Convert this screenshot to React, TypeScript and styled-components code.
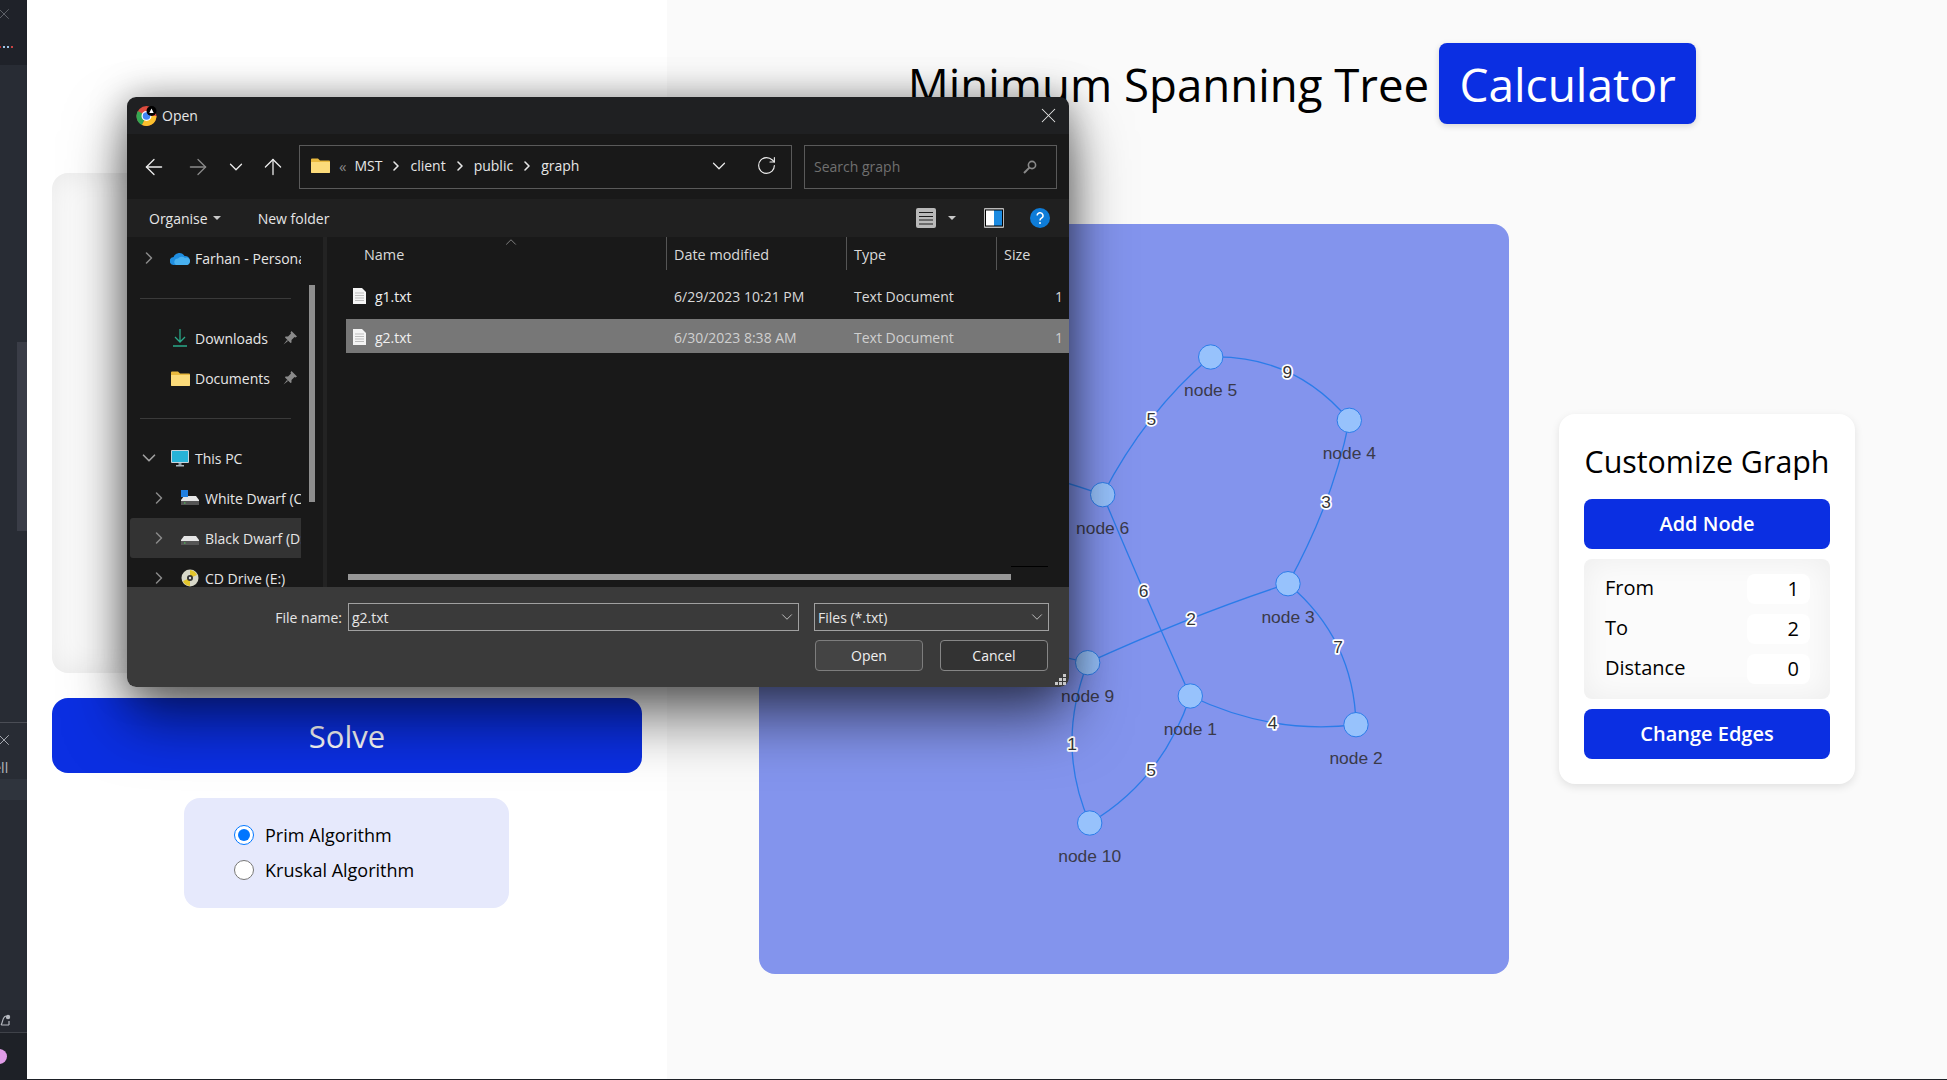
import React from "react";
import styled, {createGlobalStyle} from "styled-components";
import {ArrowLeft, ArrowRight, ArrowUp, ChevronDown, ChevronRight, ChevronUp, RotateCw, X} from "lucide-react";

const GlobalStyle = createGlobalStyle`
    html, body {
        background: #1e2127;
        height: 1080px;
        margin: 0;
        overflow: hidden;
    }
    * {
        box-sizing: border-box;
    }
`;

const Page = styled.div`
    display: flex;
    font-family: "Open Sans", "Noto Sans", sans-serif;
    height: 1079px;
    position: relative;
    width: 1947px;
`;

/* editor strip on the far left */
const Sidebar = styled.aside`
    background: #282c34;
    color: #b5b8bf;
    display: flex;
    flex-direction: column;
    flex-shrink: 0;
    overflow: hidden;
    width: 27px;
`;

const SidebarTop = styled.div`
    background: #1f2229;
    display: flex;
    flex-direction: column;
    gap: 23px;
    height: 65px;
    padding-top: 5px;
`;

const EdgeIcon = styled.span`
    display: flex;
    margin-left: -5px;
`;

const Dots = styled.div`
    display: flex;
    gap: 2px;
    margin-left: -1px;
`;

const Dot = styled.span<{$color: string}>`
    background: ${(p) => p.$color};
    height: 2px;
    width: 2px;
`;

const SidebarBody = styled.div`
    display: flex;
    flex: 1;
    flex-direction: column;
    justify-content: flex-end;
    position: relative;
`;

const ScrollThumb = styled.div`
    background: #3a3d47;
    height: 189px;
    left: 17px;
    position: absolute;
    top: 277px;
    width: 10px;
`;

const TerminalList = styled.div`
    border-top: 1px solid #4a4d55;
    display: flex;
    flex-direction: column;
    height: 288px;
    padding-top: 8px;
`;

const TerminalText = styled.div`
    font-size: 14px;
    height: 30px;
    line-height: 22px;
    margin-left: -22px;
    padding-top: 8px;
    white-space: nowrap;
`;

const TerminalActive = styled.div`
    background: #2f343d;
    height: 21px;
`;

const StatusRow = styled.div`
    align-items: center;
    background: #252830;
    border-bottom: 1px solid #3f4249;
    display: flex;
    height: 23px;
`;

const AvatarRow = styled.div`
    align-items: center;
    background: #1e2127;
    display: flex;
    height: 46px;
`;

const Avatar = styled.span`
    background: #e09ce8;
    border-radius: 50%;
    height: 15px;
    margin-left: -8px;
    width: 15px;
`;

/* app: left column */
const LeftPanel = styled.section`
    align-items: center;
    background: #fff;
    box-shadow: 1px 0 4px rgba(0, 0, 0, 0.04);
    display: flex;
    flex-direction: column;
    flex-shrink: 0;
    gap: 25px;
    padding: 173px 25px 0;
    width: 640px;
`;

const Dropzone = styled.div`
    background: #fbfbfb;
    border-radius: 16px;
    box-shadow: inset 0 0 30px rgba(0, 0, 0, 0.08);
    height: 500px;
    width: 590px;
`;

const SolveButton = styled.button`
    background: #0b2fe2;
    border: none;
    border-radius: 16px;
    color: #fff;
    font-family: inherit;
    font-size: 31px;
    font-weight: 500;
    height: 75px;
    width: 590px;
`;

const AlgorithmBox = styled.div`
    background: #e6e9fc;
    border-radius: 16px;
    display: flex;
    flex-direction: column;
    gap: 12px;
    height: 110px;
    margin-left: -1px;
    padding: 25px 50px;
    width: 325px;
`;

const AlgorithmOption = styled.label`
    align-items: center;
    color: #000;
    display: flex;
    font-size: 18px;
    gap: 11px;
    height: 23px;
`;

const Radio = styled.input`
    height: 20px;
    margin: 0;
    width: 20px;
`;

/* app: right column */
const RightPanel = styled.main`
    align-items: center;
    background: #fafafa;
    display: flex;
    flex: 1;
    flex-direction: column;
`;

const Heading = styled.header`
    align-items: center;
    display: flex;
    gap: 10px;
    height: 81px;
    margin: 43px 10px 100px 0;
`;

const Title = styled.h1`
    color: #000;
    font-size: 45.6px;
    font-weight: 400;
    margin: 0;
`;

const TitleBadge = styled.span`
    align-items: center;
    background: #0b2fe2;
    border-radius: 8px;
    box-shadow: 0 2px 6px rgba(0, 0, 0, 0.15);
    color: #fff;
    display: flex;
    font-size: 46px;
    height: 81px;
    justify-content: center;
    width: 257px;
`;

const Workspace = styled.div`
    align-items: center;
    display: flex;
    gap: 50px;
`;

const GraphCanvas = styled.div`
    background: #8394ed;
    border-radius: 16px;
    height: 750px;
    overflow: hidden;
    width: 750px;
`;

const GraphSvg = styled.svg`
    display: block;
`;

const NodeLabel = styled.text`
    fill: #3a3a4a;
    font-family: "Liberation Sans", Arial, sans-serif;
    font-size: 17.4px;
    text-anchor: middle;
`;

const EdgeLabel = styled(NodeLabel)`
    fill: #343434;
    paint-order: stroke;
    stroke: #fff;
    stroke-linejoin: round;
    stroke-width: 3.5px;
`;

const ControlCard = styled.div`
    background: #fff;
    border-radius: 16px;
    box-shadow: 0 3px 8px rgba(0, 0, 0, 0.1);
    display: flex;
    flex-direction: column;
    gap: 10px;
    padding: 25px;
    width: 296px;
`;

const CardTitle = styled.h2`
    color: #000;
    font-size: 30.4px;
    font-weight: 400;
    line-height: 46px;
    margin: 0 0 4px;
    text-align: center;
    white-space: nowrap;
`;

const CardButton = styled.button`
    background: #0b2fe2;
    border: none;
    border-radius: 8px;
    color: #fff;
    font-family: inherit;
    font-size: 20px;
    font-weight: 600;
    height: 50px;
    padding: 0 0 2px;
`;

const EdgeForm = styled.div`
    background: #fbfbfb;
    border-radius: 8px;
    box-shadow: inset 0 0 30px rgba(0, 0, 0, 0.06);
    display: flex;
    flex-direction: column;
    gap: 10px;
    padding: 15px 20px 15px 21px;
`;

const EdgeField = styled.label`
    align-items: flex-start;
    color: #000;
    display: flex;
    font-size: 20px;
    height: 30px;
    justify-content: space-between;
    line-height: 28px;
`;

const EdgeInput = styled.input`
    background: #fff;
    border: none;
    border-radius: 8px;
    color: #000;
    font-family: inherit;
    font-size: 20px;
    height: 30px;
    padding: 0 11px 2px 0;
    text-align: right;
    width: 63px;
`;

/* native windows file dialog */
const Dialog = styled.div`
    border-radius: 9px;
    box-shadow: 0 32px 60px rgba(0, 0, 0, 0.55), 0 0 36px rgba(0, 0, 0, 0.35);
    color: #e6e6e6;
    display: flex;
    flex-direction: column;
    font-family: "Open Sans", "Noto Sans", sans-serif;
    font-size: 14px;
    height: 590px;
    left: 127px;
    position: absolute;
    top: 97px;
    width: 942px;
`;

const TitleBar = styled.div`
    align-items: center;
    background: #1f2022;
    border-radius: 9px 9px 0 0;
    display: flex;
    height: 37px;
    padding: 0 8px 0 9px;
`;

const TitleText = styled.span`
    flex: 1;
`;

const NavRow = styled.div`
    align-items: center;
    background: #191919;
    display: flex;
    height: 65px;
    padding-left: 5px;
`;

const IconSlot = styled.span<{$width: number; $dim?: boolean}>`
    align-items: center;
    color: ${(p) => (p.$dim ? "#8a8a8a" : "#ececec")};
    display: flex;
    flex-shrink: 0;
    justify-content: center;
    width: ${(p) => p.$width}px;
`;

const AddressBox = styled.div`
    align-items: center;
    border: 1px solid #5a5a5a;
    display: flex;
    height: 44px;
    margin-left: 5px;
    padding-bottom: 2px;
    padding-left: 11px;
    width: 493px;
`;

const Crumbs = styled.div`
    align-items: center;
    display: flex;
    flex: 1;
    gap: 6px;
`;

const CrumbFolder = styled.span`
    display: flex;
    margin-right: 3px;
`;

const CrumbLead = styled.span`
    color: #888;
    font-size: 15px;
    margin-right: 2px;
`;

const SearchBox = styled.div`
    align-items: center;
    border: 1px solid #5a5a5a;
    color: #707070;
    display: flex;
    height: 44px;
    justify-content: space-between;
    margin-left: 12px;
    padding: 0 19px 0 9px;
    width: 253px;
`;

const Toolbar = styled.div`
    align-items: center;
    background: #202020;
    display: flex;
    height: 38px;
    padding: 0 19px 0 22px;
`;

const Caret = styled.span`
    border-left: 4px solid transparent;
    border-right: 4px solid transparent;
    border-top: 4px solid #c8c8c8;
    display: inline-block;
    height: 0;
    width: 0;
`;

const ToolItem = styled.span<{$left: number}>`
    align-items: center;
    display: flex;
    gap: 5px;
    margin-left: ${(p) => p.$left}px;
`;

const ToolSpacer = styled.span`
    flex: 1;
`;

const DialogBody = styled.div`
    background: #191919;
    display: flex;
    height: 350px;
`;

const NavPane = styled.div`
    border-right: 4px solid #232323;
    flex-shrink: 0;
    overflow: hidden;
    padding-top: 1px;
    position: relative;
    width: 200px;
`;

const NavList = styled.div`
    display: flex;
    flex-direction: column;
    width: 174px;
`;

const NavItem = styled.div<{$depth?: number; $hot?: boolean}>`
    align-items: center;
    background: ${(p) => (p.$hot ? "#333333" : "transparent")};
    border-radius: 3px 0 0 3px;
    display: flex;
    height: 40px;
    margin-left: 3px;
    overflow: hidden;
    padding-left: ${(p) => (p.$depth ? 23 : 13)}px;
    padding-right: 4px;
    white-space: nowrap;
`;

const NavChevron = styled.span`
    align-items: center;
    color: #8a8a8a;
    display: flex;
    flex-shrink: 0;
    justify-content: center;
    width: 12px;

    svg {
        flex-shrink: 0;
    }
`;

const NavIcon = styled.span`
    align-items: center;
    display: flex;
    flex-shrink: 0;
    justify-content: center;
    margin: 0 5px 0 15px;
    width: 20px;
`;

const NavPin = styled.span`
    display: flex;
    flex-shrink: 0;
    margin-left: auto;
`;

const NavDivider = styled.div`
    align-items: center;
    display: flex;
    height: 40px;
    margin-left: 13px;
    width: 151px;

    &::after {
        background: #3a3a3a;
        content: "";
        height: 1px;
        width: 100%;
    }
`;

const NavScrollbar = styled.div`
    background: #8e8e8e;
    height: 217px;
    left: 182px;
    position: absolute;
    top: 48px;
    width: 6px;
`;

const FilePane = styled.div`
    flex: 1;
    position: relative;
`;

const ColumnHeader = styled.div`
    color: #d9d9d9;
    display: grid;
    font-size: 14.4px;
    grid-template-columns: 339px 180px 150px 1fr;
    height: 41px;
`;

const ColumnCell = styled.div<{$first?: boolean}>`
    border-left: ${(p) => (p.$first ? "none" : "1px solid #555")};
    height: 33px;
    line-height: 36px;
    padding-left: ${(p) => (p.$first ? 37 : 7)}px;
`;

const SortArrow = styled.span`
    color: #a0a0a0;
    display: flex;
    left: 175px;
    position: absolute;
    top: -4px;
`;

const FileList = styled.div`
    display: flex;
    flex-direction: column;
    gap: 7px;
`;

const FileRow = styled.div<{$selected?: boolean}>`
    align-items: center;
    background: ${(p) => (p.$selected ? "#777777" : "transparent")};
    display: grid;
    grid-template-columns: 320px 180px 150px 1fr;
    height: 34px;
    margin-left: 19px;
    padding-top: 2px;
`;

const FileName = styled.div`
    align-items: center;
    color: #f0f0f0;
    display: flex;
    gap: 9px;
    padding-left: 7px;
`;

const FileCell = styled.div<{$selected?: boolean}>`
    color: ${(p) => (p.$selected ? "#cfcfcf" : "#d9d9d9")};
    padding-left: 8px;
`;

const FileSize = styled(FileCell)`
    padding-right: 6px;
    text-align: right;
`;

const HScrollbar = styled.div`
    background: #979797;
    bottom: 7px;
    height: 6px;
    left: 21px;
    position: absolute;
    width: 663px;
`;

const HScrollMark = styled.div`
    background: #000;
    bottom: 20px;
    height: 1px;
    left: 684px;
    position: absolute;
    width: 37px;
`;

const Footer = styled.div`
    background: #3a3a3a;
    border-radius: 0 0 9px 9px;
    display: flex;
    flex: 1;
    flex-direction: column;
    gap: 9px;
    padding: 16px 20px 0 0;
    position: relative;
`;

const FooterRow = styled.div`
    align-items: center;
    display: flex;
    justify-content: flex-end;
`;

const FileNameLabel = styled.span`
    margin-right: 6px;
`;

const ComboBox = styled.div<{$width: number; $left?: number}>`
    align-items: center;
    border: 1px solid #a0a0a0;
    display: flex;
    height: 28px;
    justify-content: space-between;
    margin-left: ${(p) => p.$left || 0}px;
    padding: 0 2px 0 3px;
    width: ${(p) => p.$width}px;
`;

const DialogButton = styled.button<{$primary?: boolean}>`
    background: ${(p) => (p.$primary ? "#444444" : "#333333")};
    border: 1px solid ${(p) => (p.$primary ? "#7d7d7d" : "#868686")};
    border-radius: 4px;
    color: #f0f0f0;
    font-family: inherit;
    font-size: 14px;
    height: 31px;
    margin-left: 16px;
    margin-right: 1px;
    padding: 0;
    width: 108px;
`;

const GripSvg = styled.svg`
    bottom: 2px;
    position: absolute;
    right: 3px;
`;

const ChromeIcon = () => (
    <svg width="26" height="22" viewBox="0 0 26 22">
        <circle cx="10.5" cy="11" r="10" fill="#dd4b3e" />
        <path d="M10.5 11 L1.8 6 A10 10 0 0 0 6 20 Z" fill="#34a853" />
        <path d="M10.5 11 L6 20 A10 10 0 0 0 20.5 11 Z" fill="#fbc02d" />
        <circle cx="10.5" cy="11" r="5" fill="#fff" />
        <circle cx="10.5" cy="11" r="3.8" fill="#4285f4" />
        <circle cx="15.5" cy="6" r="5" fill="#000" />
        <path d="M13.3 8 L15.5 3.5 L17.7 8 Z" fill="#fff" />
    </svg>
);

const FolderIcon = () => (
    <svg width="19" height="15" viewBox="0 0 19 15">
        <path d="M0 1.5 A1 1 0 0 1 1 .5 H7 L9 2.5 H18 A1 1 0 0 1 19 3.5 V14 A1 1 0 0 1 18 15 H1 A1 1 0 0 1 0 14 Z" fill="#e9b93e" />
        <path d="M0 4 H19 V14 A1 1 0 0 1 18 15 H1 A1 1 0 0 1 0 14 Z" fill="#fcdb7a" />
    </svg>
);

const CloudIcon = () => (
    <svg width="20" height="13" viewBox="0 0 20 13">
        <path d="M4 13 A4 4 0 0 1 3.6 5 A6 6 0 0 1 14.5 4 A4.5 4.5 0 0 1 16 13 Z" fill="#1f8ee0" />
        <path d="M6 13 A3.5 3.5 0 0 1 8 6.5 A5 5 0 0 1 15 6 A3.5 3.5 0 0 1 20 9.5 A3.5 3.5 0 0 1 16 13 Z" fill="#48b1f0" />
    </svg>
);

const DownloadIcon = () => (
    <svg width="14" height="18" viewBox="0 0 14 18" fill="none" stroke="#2aa889" strokeWidth="1.3">
        <path d="M7 0 V13 M2 8 L7 13 L12 8 M0 17 H14" />
    </svg>
);

const PinIcon = () => (
    <svg width="14" height="14" viewBox="0 0 14 14" fill="#8a8a8a">
        <path d="M8.5 0 L14 5.5 L12.5 6.5 L11.5 6 L8.5 9 L8.5 11.5 L7.5 12 L2 6.5 L2.5 5.5 L5 5.5 L8 2.5 L7.5 1.5 Z M4 9 L0.5 13.5 L5 10 Z" />
    </svg>
);

const MonitorIcon = () => (
    <svg width="18" height="17" viewBox="0 0 18 17">
        <rect x="0" y="0" width="18" height="13" rx="1" fill="#c8d4dc" />
        <rect x="1" y="1" width="16" height="11" fill="#27b3d8" />
        <rect x="7.5" y="13" width="3" height="2.5" fill="#8a9aa4" />
        <rect x="5" y="15" width="8" height="1.5" fill="#a8b4bc" />
    </svg>
);

const DriveIcon: React.FunctionComponent<{windows?: boolean}> = ({windows}) => (
    <svg width="18" height="16" viewBox="0 0 18 16">
        <path d="M3 6 H15 L18 10 V15 H0 V10 Z" fill="#e6e6e6" />
        <rect x="0" y="11" width="18" height="4" fill="#555" />
        <rect x="3" y="12.5" width="1.5" height="1" fill="#4fd35a" />
        {windows && <rect x="0" y="0" width="7" height="7" fill="#1f7fe0" />}
    </svg>
);

const DiscIcon = () => (
    <svg width="18" height="18" viewBox="0 0 18 18">
        <circle cx="9" cy="9" r="8.5" fill="#d8d8c8" />
        <path d="M9 1 A8 8 0 0 1 16 6 L9 9 Z M2 12 A8 8 0 0 0 9 17 L9 9 Z" fill="#e2c52c" />
        <circle cx="9" cy="9" r="3" fill="#333" />
        <circle cx="9" cy="9" r="1.2" fill="#ddd" />
    </svg>
);

const FileIcon = () => (
    <svg width="13" height="16" viewBox="0 0 13 16">
        <path d="M0 0 H9 L13 4 V16 H0 Z" fill="#f4f4f4" />
        <path d="M2 5 H11 M2 7.5 H11 M2 10 H11 M2 12.5 H11" stroke="#bdbdbd" strokeWidth="1" />
    </svg>
);

const SearchGlass = () => (
    <svg width="14" height="14" viewBox="0 0 14 14" fill="none" stroke="#8a8a8a" strokeWidth="1.6">
        <circle cx="9" cy="5" r="3.6" />
        <path d="M6.4 7.6 L1 13" strokeWidth="2" />
    </svg>
);

const ViewIcon = () => (
    <svg width="20" height="20" viewBox="0 0 20 20">
        <rect width="20" height="20" rx="2" fill="#b9b9b9" />
        <path d="M3 4.5 H17 M3 8.5 H17 M3 12 H17 M3 16 H17" stroke="#1c1c1c" strokeWidth="1" />
    </svg>
);

const PaneIcon = () => (
    <svg width="20" height="20" viewBox="0 0 20 20">
        <rect width="20" height="20" rx="1" fill="#b9b9b9" />
        <rect x="1" y="1.5" width="18" height="17" fill="#000" />
        <rect x="2" y="2.5" width="8" height="15" fill="#fff" />
        <rect x="10" y="2.5" width="8" height="15" fill="#1b8ae0" />
    </svg>
);

const HelpIcon = () => (
    <svg width="20" height="20" viewBox="0 0 20 20">
        <circle cx="10" cy="10" r="10" fill="#0e7cd8" />
        <path d="M7.2 7.6 A2.9 2.9 0 1 1 11.4 10.2 C10.4 10.8 10 11.3 10 12.6" fill="none" stroke="#fff" strokeWidth="1.5" />
        <circle cx="10" cy="15" r="1" fill="#fff" />
    </svg>
);

const BellIcon = () => (
    <svg width="14" height="14" viewBox="0 0 14 14" fill="none" stroke="#b5b8bf" strokeWidth="1.2">
        <path d="M1 11 C3 9 2 3 6 2 M1 11 H9 M9 11 V7" />
        <circle cx="8" cy="3" r="2.2" fill="#b5b8bf" stroke="none" />
    </svg>
);

type Point = {x: number; y: number};

// page coordinates minus the canvas corner at 759,224
const at = (x: number, y: number): Point => ({x: x - 759, y: y - 224});

// nodes 7 and 8 sit fully behind the dialog, so they have no label to show
const nodes: Array<{name: string; pos: Point; covered?: boolean}> = [
    {name: "node 1", pos: at(1190.3, 696)},
    {name: "node 2", pos: at(1356, 724.7)},
    {name: "node 3", pos: at(1288, 583.7)},
    {name: "node 4", pos: at(1349.3, 420.3)},
    {name: "node 5", pos: at(1210.7, 357)},
    {name: "node 6", pos: at(1102.7, 494.7)},
    {name: "node 7", pos: at(985, 462), covered: true},
    {name: "node 8", pos: at(985, 635), covered: true},
    {name: "node 9", pos: at(1087.7, 662.7)},
    {name: "node 10", pos: at(1089.7, 823)},
];

const byName = (n: number) => nodes[n - 1].pos;

const edges: Array<{from: number; to: number; label?: string; mid: Point}> = [
    {from: 5, to: 4, label: "9", mid: at(1287.3, 371.7)},
    {from: 5, to: 6, label: "5", mid: at(1151.3, 418.7)},
    {from: 4, to: 3, label: "3", mid: at(1326, 501.7)},
    {from: 6, to: 1, label: "6", mid: at(1143.7, 590.7)},
    {from: 3, to: 9, label: "2", mid: at(1191, 618.7)},
    {from: 3, to: 2, label: "7", mid: at(1338, 646.7)},
    {from: 1, to: 2, label: "4", mid: at(1272.7, 722.7)},
    {from: 1, to: 10, label: "5", mid: at(1151, 770)},
    {from: 9, to: 10, label: "1", mid: at(1072, 744)},
    {from: 6, to: 7, mid: at(1040, 475)},
    {from: 9, to: 8, mid: at(1035, 650)},
];

const edgePath = (a: Point, b: Point, m: Point) => {
    const cx = 2 * m.x - (a.x + b.x) / 2;
    const cy = 2 * m.y - (a.y + b.y) / 2;
    return `M${a.x} ${a.y} Q${cx} ${cy} ${b.x} ${b.y}`;
};

const Graph = () => (
    <GraphCanvas>
        <GraphSvg width="750" height="750" viewBox="0 0 750 750">
            {edges.map((e) => (
                <path
                    key={`${e.from}-${e.to}`}
                    d={edgePath(byName(e.from), byName(e.to), e.mid)}
                    fill="none"
                    stroke="#2b7ce9"
                    strokeWidth="1.3"
                />
            ))}
            {nodes.map((n) => (
                <g key={n.name}>
                    <circle cx={n.pos.x} cy={n.pos.y} r="12.2" fill="#97c2fc" stroke="#2b7ce9" strokeWidth="1" />
                    {!n.covered && (
                        <NodeLabel x={n.pos.x} y={n.pos.y + 39}>
                            {n.name}
                        </NodeLabel>
                    )}
                </g>
            ))}
            {edges
                .filter((e) => e.label)
                .map((e) => (
                    <EdgeLabel key={`l${e.from}-${e.to}`} x={e.mid.x} y={e.mid.y + 6}>
                        {e.label}
                    </EdgeLabel>
                ))}
        </GraphSvg>
    </GraphCanvas>
);

const OpenDialog = () => (
    <Dialog>
        <TitleBar>
            <ChromeIcon />
            <TitleText>Open</TitleText>
            <X size={25} strokeWidth={1} />
        </TitleBar>
        <NavRow>
            <IconSlot $width={44}>
                <ArrowLeft size={26} strokeWidth={1.2} />
            </IconSlot>
            <IconSlot $width={44} $dim>
                <ArrowRight size={26} strokeWidth={1.2} />
            </IconSlot>
            <IconSlot $width={32}>
                <ChevronDown size={22} strokeWidth={1.4} />
            </IconSlot>
            <IconSlot $width={42}>
                <ArrowUp size={26} strokeWidth={1.2} />
            </IconSlot>
            <AddressBox>
                <Crumbs>
                    <CrumbFolder>
                        <FolderIcon />
                    </CrumbFolder>
                    <CrumbLead>«</CrumbLead>
                    <span>MST</span>
                    <ChevronRight size={16} strokeWidth={2.4} />
                    <span>client</span>
                    <ChevronRight size={16} strokeWidth={2.4} />
                    <span>public</span>
                    <ChevronRight size={16} strokeWidth={2.4} />
                    <span>graph</span>
                </Crumbs>
                <IconSlot $width={44}>
                    <ChevronDown size={22} strokeWidth={1.3} />
                </IconSlot>
                <IconSlot $width={50}>
                    <RotateCw size={21} strokeWidth={1.3} />
                </IconSlot>
            </AddressBox>
            <SearchBox>
                <span>Search graph</span>
                <SearchGlass />
            </SearchBox>
        </NavRow>
        <Toolbar>
            <ToolItem $left={0}>
                Organise <Caret />
            </ToolItem>
            <ToolItem $left={37}>New folder</ToolItem>
            <ToolSpacer />
            <ViewIcon />
            <ToolItem $left={12}>
                <Caret />
            </ToolItem>
            <ToolItem $left={28}>
                <PaneIcon />
            </ToolItem>
            <ToolItem $left={26}>
                <HelpIcon />
            </ToolItem>
        </Toolbar>
        <DialogBody>
            <NavPane>
                <NavList>
                    <NavItem>
                        <NavChevron>
                            <ChevronRight size={20} strokeWidth={1.8} />
                        </NavChevron>
                        <NavIcon>
                            <CloudIcon />
                        </NavIcon>
                        Farhan - Personal
                    </NavItem>
                    <NavDivider />
                    <NavItem>
                        <NavChevron />
                        <NavIcon>
                            <DownloadIcon />
                        </NavIcon>
                        Downloads
                        <NavPin>
                            <PinIcon />
                        </NavPin>
                    </NavItem>
                    <NavItem>
                        <NavChevron />
                        <NavIcon>
                            <FolderIcon />
                        </NavIcon>
                        Documents
                        <NavPin>
                            <PinIcon />
                        </NavPin>
                    </NavItem>
                    <NavDivider />
                    <NavItem>
                        <NavChevron>
                            <ChevronDown size={22} strokeWidth={1.8} color="#a0a0a0" />
                        </NavChevron>
                        <NavIcon>
                            <MonitorIcon />
                        </NavIcon>
                        This PC
                    </NavItem>
                    <NavItem $depth={1}>
                        <NavChevron>
                            <ChevronRight size={20} strokeWidth={1.8} />
                        </NavChevron>
                        <NavIcon>
                            <DriveIcon windows />
                        </NavIcon>
                        White Dwarf (C:)
                    </NavItem>
                    <NavItem $depth={1} $hot>
                        <NavChevron>
                            <ChevronRight size={20} strokeWidth={1.8} />
                        </NavChevron>
                        <NavIcon>
                            <DriveIcon />
                        </NavIcon>
                        Black Dwarf (D:)
                    </NavItem>
                    <NavItem $depth={1}>
                        <NavChevron>
                            <ChevronRight size={20} strokeWidth={1.8} />
                        </NavChevron>
                        <NavIcon>
                            <DiscIcon />
                        </NavIcon>
                        CD Drive (E:)
                    </NavItem>
                </NavList>
                <NavScrollbar />
            </NavPane>
            <FilePane>
                <SortArrow>
                    <ChevronUp size={18} strokeWidth={1} />
                </SortArrow>
                <ColumnHeader>
                    <ColumnCell $first>Name</ColumnCell>
                    <ColumnCell>Date modified</ColumnCell>
                    <ColumnCell>Type</ColumnCell>
                    <ColumnCell>Size</ColumnCell>
                </ColumnHeader>
                <FileList>
                    <FileRow>
                        <FileName>
                            <FileIcon />
                            g1.txt
                        </FileName>
                        <FileCell>6/29/2023 10:21 PM</FileCell>
                        <FileCell>Text Document</FileCell>
                        <FileSize>1</FileSize>
                    </FileRow>
                    <FileRow $selected>
                        <FileName>
                            <FileIcon />
                            g2.txt
                        </FileName>
                        <FileCell $selected>6/30/2023 8:38 AM</FileCell>
                        <FileCell $selected>Text Document</FileCell>
                        <FileSize $selected>1</FileSize>
                    </FileRow>
                </FileList>
                <HScrollMark />
                <HScrollbar />
            </FilePane>
        </DialogBody>
        <Footer>
            <FooterRow>
                <FileNameLabel>File name:</FileNameLabel>
                <ComboBox $width={451}>
                    g2.txt
                    <ChevronDown size={18} strokeWidth={1} />
                </ComboBox>
                <ComboBox $width={235} $left={15}>
                    Files (*.txt)
                    <ChevronDown size={18} strokeWidth={1} />
                </ComboBox>
            </FooterRow>
            <FooterRow>
                <DialogButton $primary>Open</DialogButton>
                <DialogButton>Cancel</DialogButton>
            </FooterRow>
            <GripSvg width="11" height="11" viewBox="0 0 11 11" fill="#c8c8c8">
                <rect x="8" y="0" width="3" height="3" />
                <rect x="4" y="4" width="3" height="3" />
                <rect x="8" y="4" width="3" height="3" />
                <rect x="0" y="8" width="3" height="3" />
                <rect x="4" y="8" width="3" height="3" />
                <rect x="8" y="8" width="3" height="3" />
            </GripSvg>
        </Footer>
    </Dialog>
);

const App = () => (
    <Page>
        <GlobalStyle />
        <Sidebar>
            <SidebarTop>
                <EdgeIcon>
                    <X size={18} strokeWidth={0.8} color="#8a8d94" />
                </EdgeIcon>
                <Dots>
                    <Dot $color="#b33" />
                    <Dot $color="#9cc4e8" />
                    <Dot $color="#9cc4e8" />
                    <Dot $color="#c44" />
                </Dots>
            </SidebarTop>
            <SidebarBody>
                <ScrollThumb />
                <TerminalList>
                    <EdgeIcon>
                        <X size={18} strokeWidth={1} color="#cfd2d8" />
                    </EdgeIcon>
                    <TerminalText>shell</TerminalText>
                    <TerminalActive />
                </TerminalList>
            </SidebarBody>
            <StatusRow>
                <BellIcon />
            </StatusRow>
            <AvatarRow>
                <Avatar />
            </AvatarRow>
        </Sidebar>
        <LeftPanel>
            <Dropzone />
            <SolveButton>Solve</SolveButton>
            <AlgorithmBox>
                <AlgorithmOption>
                    <Radio type="radio" name="algorithm" defaultChecked />
                    Prim Algorithm
                </AlgorithmOption>
                <AlgorithmOption>
                    <Radio type="radio" name="algorithm" />
                    Kruskal Algorithm
                </AlgorithmOption>
            </AlgorithmBox>
        </LeftPanel>
        <RightPanel>
            <Heading>
                <Title>Minimum Spanning Tree</Title>
                <TitleBadge>Calculator</TitleBadge>
            </Heading>
            <Workspace>
                <Graph />
                <ControlCard>
                    <CardTitle>Customize Graph</CardTitle>
                    <CardButton>Add Node</CardButton>
                    <EdgeForm>
                        <EdgeField>
                            From
                            <EdgeInput defaultValue="1" />
                        </EdgeField>
                        <EdgeField>
                            To
                            <EdgeInput defaultValue="2" />
                        </EdgeField>
                        <EdgeField>
                            Distance
                            <EdgeInput defaultValue="0" />
                        </EdgeField>
                    </EdgeForm>
                    <CardButton>Change Edges</CardButton>
                </ControlCard>
            </Workspace>
        </RightPanel>
        <OpenDialog />
    </Page>
);

export default App;
